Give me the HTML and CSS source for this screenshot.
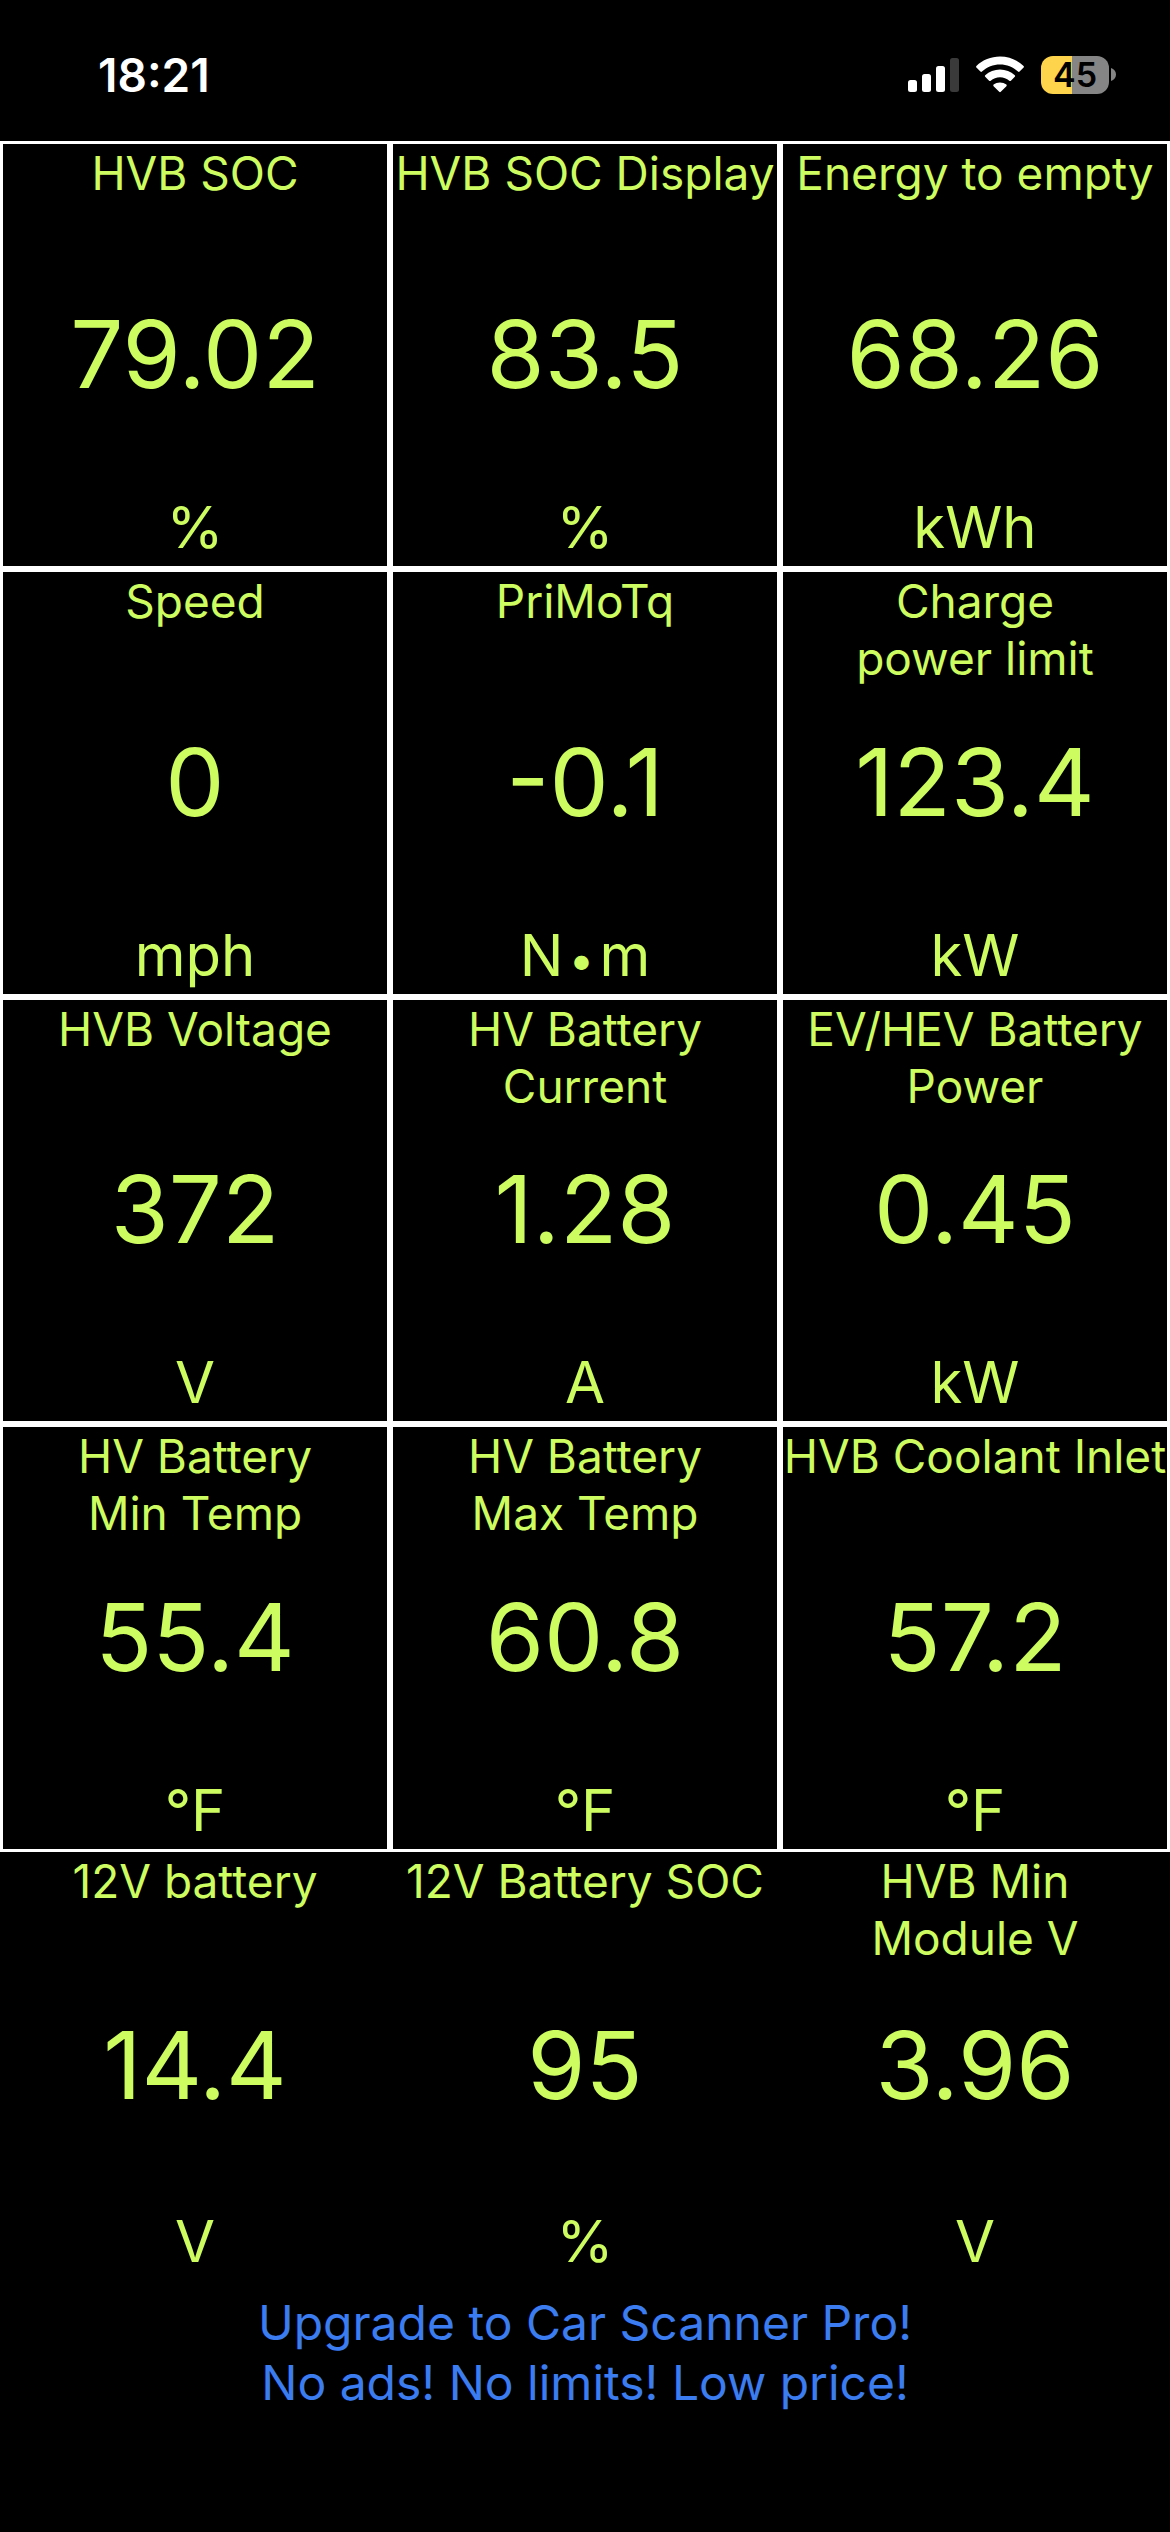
FILE: index.html
```
<!DOCTYPE html>
<html lang="en">
<head>
	<meta charset="utf-8">
	<meta name="viewport" content="width=device-width, initial-scale=1">
	<title>Car Scanner</title>
	<link rel="stylesheet" href="styles.css">
</head>
<body>
	<header class="status-bar">
		<div class="time">18:21</div>
		<div class="status-icons">
			<svg class="signal" width="51" height="34" viewBox="0 0 51 34">
				<rect x="0" y="22" width="9" height="12" rx="2.5" fill="#fff"/>
				<rect x="14" y="16" width="9" height="18" rx="2.5" fill="#fff"/>
				<rect x="28" y="8" width="9" height="26" rx="2.5" fill="#fff"/>
				<rect x="42" y="0" width="9" height="34" rx="2.5" fill="#3a3a3a"/>
			</svg>
			<svg class="wifi" width="50" height="37" viewBox="0 0 50 37">
				<g fill="#fff">
					<path d="M25 0.5C34 0.5 42.500 4 48.600 10Q49.300 10.800 48.600 11.600L44.600 15.600Q43.800 16.300 43 15.600C38 11 31.800 8.500 25 8.500S12 11 7 15.600Q6.200 16.300 5.400 15.600L1.400 11.600Q0.700 10.800 1.400 10C7.500 4 16 0.500 25 0.500Z"/>
					<path d="M25 13.500C30.600 13.500 35.800 15.600 39.800 19.200Q40.600 20 39.800 20.800L35.900 24.700Q35.100 25.400 34.300 24.700C31.700 22.500 28.500 21.300 25 21.300S18.300 22.500 15.700 24.700Q14.900 25.400 14.100 24.700L10.200 20.800Q9.400 20 10.200 19.200C14.200 15.600 19.400 13.500 25 13.500Z"/>
					<path d="M25 26.400C27.500 26.400 29.600 27.200 31.400 28.600Q32.200 29.400 31.400 30.200L25.800 35.800Q25 36.600 24.200 35.800L18.600 30.200Q17.800 29.400 18.600 28.600C20.400 27.200 22.500 26.400 25 26.400Z"/>
				</g>
			</svg>
			<div class="battery">
				<div class="battery-level">45</div>
				<svg width="5" height="13" viewBox="0 0 5 13">
					<path d="M0 0C3 1 5 3.500 5 6.500S3 12 0 13Z" fill="#858585"/>
				</svg>
			</div>
		</div>
	</header>

	<main class="dashboard">
		<section class="cell">
			<div class="name">HVB SOC</div>
			<div class="value">79.02</div>
			<div class="unit">%</div>
		</section>
		<section class="cell">
			<div class="name">HVB SOC Display</div>
			<div class="value">83.5</div>
			<div class="unit">%</div>
		</section>
		<section class="cell">
			<div class="name">Energy to empty</div>
			<div class="value">68.26</div>
			<div class="unit">kWh</div>
		</section>

		<section class="cell">
			<div class="name">Speed</div>
			<div class="value">0</div>
			<div class="unit">mph</div>
		</section>
		<section class="cell">
			<div class="name">PriMoTq</div>
			<div class="value">-0.1</div>
			<div class="unit">N<span class="dot">•</span>m</div>
		</section>
		<section class="cell">
			<div class="name">Charge<br>power limit</div>
			<div class="value">123.4</div>
			<div class="unit">kW</div>
		</section>

		<section class="cell">
			<div class="name">HVB Voltage</div>
			<div class="value">372</div>
			<div class="unit">V</div>
		</section>
		<section class="cell">
			<div class="name">HV Battery<br>Current</div>
			<div class="value">1.28</div>
			<div class="unit">A</div>
		</section>
		<section class="cell">
			<div class="name">EV/HEV Battery<br>Power</div>
			<div class="value">0.45</div>
			<div class="unit">kW</div>
		</section>

		<section class="cell">
			<div class="name">HV Battery<br>Min Temp</div>
			<div class="value">55.4</div>
			<div class="unit">°F</div>
		</section>
		<section class="cell">
			<div class="name">HV Battery<br>Max Temp</div>
			<div class="value">60.8</div>
			<div class="unit">°F</div>
		</section>
		<section class="cell">
			<div class="name">HVB Coolant Inlet</div>
			<div class="value">57.2</div>
			<div class="unit">°F</div>
		</section>

		<section class="cell plain">
			<div class="name">12V battery</div>
			<div class="value">14.4</div>
			<div class="unit">V</div>
		</section>
		<section class="cell plain">
			<div class="name">12V Battery SOC</div>
			<div class="value">95</div>
			<div class="unit">%</div>
		</section>
		<section class="cell plain">
			<div class="name">HVB Min<br>Module V</div>
			<div class="value">3.96</div>
			<div class="unit">V</div>
		</section>
	</main>

	<footer class="upgrade">
		<a href="#upgrade">Upgrade to Car Scanner Pro!<br>No ads! No limits! Low price!</a>
	</footer>
</body>
</html>
```
FILE: styles.css
```
* {
	box-sizing: border-box;
}

body {
	display: flex;
	flex-direction: column;
	min-height: 100vh;
	margin: 0;
	background-color: #000;
	color: #cdfc60;
	font-family: Inter, "Liberation Sans", sans-serif;
}

/* status bar */
.status-bar {
	display: flex;
	justify-content: space-between;
	align-items: center;
	height: 141px;
	padding: 8px 54px 0 98px;
	color: #fff;
}
.time {
	font-size: 46px;
	font-weight: 600;
}
.status-icons {
	display: flex;
	align-items: center;
	gap: 16px;
}
.battery {
	display: flex;
	align-items: center;
	gap: 2px;
}
.battery-level {
	width: 68px;
	border-radius: 12px;
	background: linear-gradient(to right, #fdd44b 45%, #858585 45%);
	color: #000;
	font-size: 34px;
	font-weight: 600;
	line-height: 38px;
	text-align: center;
}

/* gauges */
.dashboard {
	flex: 1;
	display: grid;
	grid-template-columns: repeat(3, 1fr);
	grid-auto-rows: 1fr;
}
.cell {
	display: grid;
	grid-template-rows: 1fr auto 1fr;
	min-width: 0;
	padding: 1px 0 3px;
	border: 3px solid #fff;
	text-align: center;
	white-space: nowrap;
}
.plain {
	border-color: transparent;
	border-width: 0 3px;
}
.name {
	font-size: 46px;
	line-height: 57px;
}
.value {
	font-size: 94px;
	line-height: 112px;
}
.unit {
	align-self: end;
	font-size: 58px;
	line-height: 72px;
}
.dot {
	margin: 0 5px;
	font-size: 46px;
	line-height: 1;
}

.upgrade {
	height: 252px;
	padding-top: 13px;
	font-size: 48px;
	line-height: 60px;
	text-align: center;
}
.upgrade a {
	color: #3b7cf0;
	text-decoration: none;
}
```
